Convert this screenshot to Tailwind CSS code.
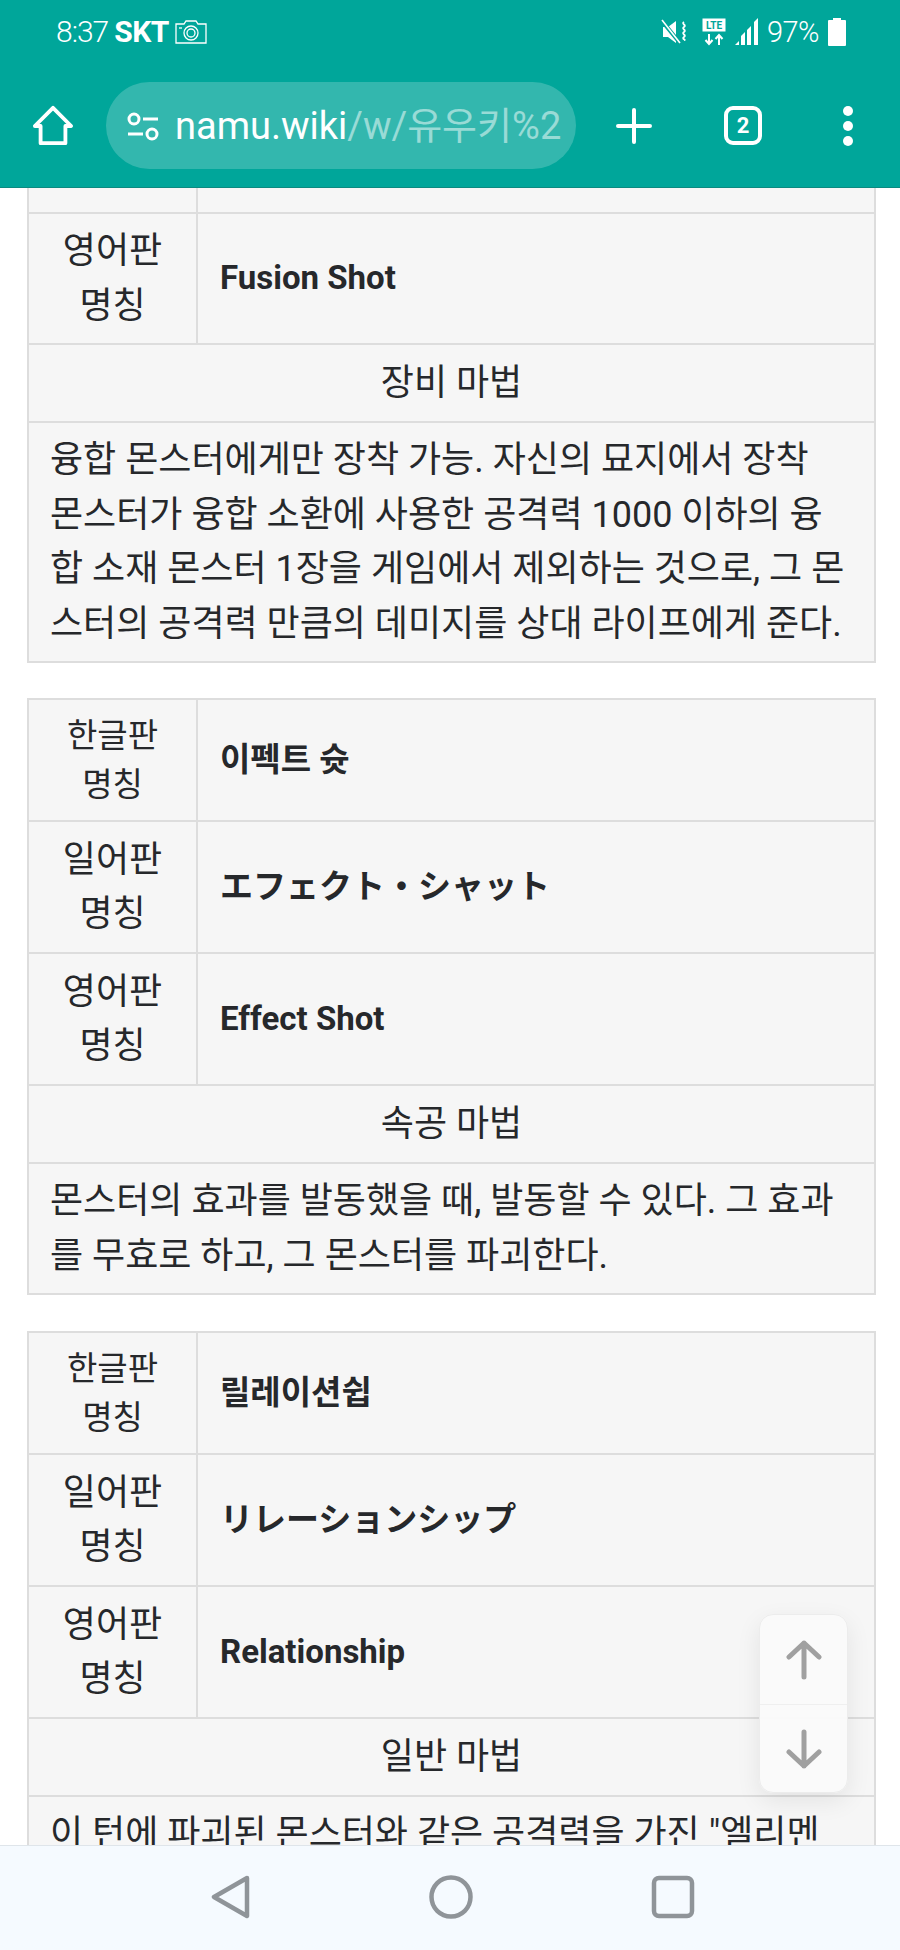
<!DOCTYPE html>
<html lang="ko"><head><meta charset="utf-8">
<script src="https://cdn.jsdelivr.net/npm/@tailwindcss/browser@4"></script>
</head>
<body class="m-0 bg-white">
<div class="relative w-[900px] h-[1950px] overflow-hidden flex flex-col bg-white font-['Roboto','Noto_Sans_CJK_KR',sans-serif] text-[#26282b]">
  <header class="h-[188px] shrink-0 bg-[#00a69a] border-b border-[#0b8a80] text-white flex flex-col">
    <div class="h-[64px] flex items-center justify-between pl-[56px] pr-[54px]">
      <div class="flex items-center gap-[6px] text-[30px] leading-none">
        <span class="tracking-[-1px] font-light">8:37</span><span class="font-bold tracking-[-0.500px]">SKT</span>
        <svg width="32" height="24" viewBox="0 0 32 24" fill="none" stroke="white" stroke-width="1.3"><path d="M1 4h8l2-3h10l2 3h8v19H1z"/><circle cx="16" cy="13" r="7"/><circle cx="16" cy="13" r="4"/><path d="M4 8h3"/></svg>
      </div>
      <div class="flex items-center">
        <svg width="28" height="28" viewBox="0 0 28 28" fill="white" class="mr-[13px]"><path d="M2 9h5l8-6v22l-8-6H2z"/><path d="M1 3l18 22" stroke="#00a69a" stroke-width="4"/><path d="M1 2l18 23" stroke="white" stroke-width="1.6"/><path d="M23 4c-3 2 3 3 0 5s3 3 0 5 3 3 0 5 3 3 0 3" fill="none" stroke="white" stroke-width="1.8"/></svg>
        <svg width="24" height="28" viewBox="0 0 24 28" class="mr-[8px]"><rect x="0.5" y="0.5" width="23" height="13" fill="white"/><text x="12" y="11" text-anchor="middle" font-size="10" font-weight="700" fill="#00a69a" font-family="Roboto">LTE</text><path d="M7 16v9M3.500 22l3.500 4 3.500-4M17 27v-9M13.500 21l3.500-4 3.500 4" stroke="white" stroke-width="2" fill="none"/></svg>
        <svg width="26" height="28" viewBox="0 0 26 28" fill="white" class="mr-[7px]"><path d="M1 27l4-4v4zM7 27v-9l4-4v13zM13 27V12l4-4v19zM20 27V4l4-4v27z"/></svg>
        <span class="text-[29px] leading-none font-light tracking-[-0.500px] mr-[9px]">97%</span>
        <svg width="18" height="28" viewBox="0 0 18 28" fill="white"><path d="M5 0h8v2h4a1 1 0 0 1 1 1v24a1 1 0 0 1-1 1H1a1 1 0 0 1-1-1V3a1 1 0 0 1 1-1h4z"/></svg>
      </div>
    </div>
    <div class="flex-1 flex items-center">
      <div class="w-[106px] shrink-0 flex justify-center">
        <svg width="42" height="42" viewBox="0 0 44 44" fill="none" stroke="white" stroke-width="4" stroke-linejoin="round" stroke-linecap="round"><path d="M3 22L22 3l19 19h-6v18H9V22z"/></svg>
      </div>
      <div class="w-[470px] h-[87px] rounded-[44px] bg-white/20 flex items-center pl-[20px] overflow-hidden shrink-0">
        <svg width="34" height="30" viewBox="0 0 34 30" fill="none" stroke="white" stroke-width="3" class="shrink-0"><circle cx="8" cy="8" r="5"/><path d="M17 8h15M2 23h15"/><circle cx="26" cy="23" r="5"/></svg>
        <div class="ml-[15px] text-[38px] leading-[48px] whitespace-nowrap overflow-hidden w-[386px] shrink-0"><span class="text-white">namu.wiki</span><span class="text-white/50">/w/유우키%20</span></div>
      </div>
      <div class="w-[116px] shrink-0 flex justify-center">
        <svg width="36" height="36" viewBox="0 0 36 36" stroke="white" stroke-width="4" stroke-linecap="round"><path d="M18 2v32M2 18h32"/></svg>
      </div>
      <div class="w-[38px] h-[39px] ml-[32px] shrink-0 border-[4px] border-white rounded-[9px] flex items-center justify-center text-[22px] font-bold leading-none">2</div>
      <div class="flex-1 flex flex-col items-center gap-[5px] pl-[34px]">
        <span class="w-[10px] h-[10px] rounded-full bg-white"></span><span class="w-[10px] h-[10px] rounded-full bg-white"></span><span class="w-[10px] h-[10px] rounded-full bg-white"></span>
      </div>
    </div>
  </header>

  <main class="flex-1 overflow-hidden px-[27px] text-[36px] leading-[54.500px]">
    <table class="w-[849px] border-collapse table-fixed bg-[#f6f6f6] mb-[35px]">
      <colgroup><col class="w-[169px]"><col></colgroup>
      <tbody>
        <tr class="h-[25px]"><td class="border-x-2 border-b-2 border-[#ddd] p-0 leading-none"></td><td class="border-x-2 border-b-2 border-[#ddd] p-0 leading-none"></td></tr>
        <tr class="h-[131px]"><td class="border-2 border-[#ddd] text-center">영어판<br>명칭</td><td class="border-2 border-[#ddd] pl-[22px] font-bold text-[33px]">Fusion Shot</td></tr>
        <tr class="h-[78px]"><td colspan="2" class="border-2 border-[#ddd] text-center">장비 마법</td></tr>
        <tr><td colspan="2" class="border-2 border-[#ddd] px-[21px] py-[10px] whitespace-nowrap">융합 몬스터에게만 장착 가능. 자신의 묘지에서 장착<br>몬스터가 융합 소환에 사용한 공격력 1000 이하의 융<br>합 소재 몬스터 1장을 게임에서 제외하는 것으로, 그 몬<br>스터의 공격력 만큼의 데미지를 상대 라이프에게 준다.</td></tr>
      </tbody>
    </table>
    <table class="w-[849px] border-collapse table-fixed bg-[#f6f6f6] mb-[36px]">
      <colgroup><col class="w-[169px]"><col></colgroup>
      <tbody>
        <tr class="h-[122px]"><td class="border-2 border-[#ddd] text-center text-[33px] leading-[49px]">한글판<br>명칭</td><td class="border-2 border-[#ddd] pl-[22px] font-bold text-[33px]">이펙트 슛</td></tr>
        <tr class="h-[132px]"><td class="border-2 border-[#ddd] text-center">일어판<br>명칭</td><td class="border-2 border-[#ddd] pl-[22px] font-bold text-[33px]">エフェクト・シャット</td></tr>
        <tr class="h-[132px]"><td class="border-2 border-[#ddd] text-center">영어판<br>명칭</td><td class="border-2 border-[#ddd] pl-[22px] font-bold text-[33px]">Effect Shot</td></tr>
        <tr class="h-[78px]"><td colspan="2" class="border-2 border-[#ddd] text-center">속공 마법</td></tr>
        <tr><td colspan="2" class="border-2 border-[#ddd] px-[21px] py-[10px] whitespace-nowrap">몬스터의 효과를 발동했을 때, 발동할 수 있다. 그 효과<br>를 무효로 하고, 그 몬스터를 파괴한다.</td></tr>
      </tbody>
    </table>
    <table class="w-[849px] border-collapse table-fixed bg-[#f6f6f6]">
      <colgroup><col class="w-[169px]"><col></colgroup>
      <tbody>
        <tr class="h-[122px]"><td class="border-2 border-[#ddd] text-center text-[33px] leading-[49px]">한글판<br>명칭</td><td class="border-2 border-[#ddd] pl-[22px] font-bold text-[33px]">릴레이션쉽</td></tr>
        <tr class="h-[132px]"><td class="border-2 border-[#ddd] text-center">일어판<br>명칭</td><td class="border-2 border-[#ddd] pl-[22px] font-bold text-[33px]">リレーションシップ</td></tr>
        <tr class="h-[132px]"><td class="border-2 border-[#ddd] text-center">영어판<br>명칭</td><td class="border-2 border-[#ddd] pl-[22px] font-bold text-[33px]">Relationship</td></tr>
        <tr class="h-[78px]"><td colspan="2" class="border-2 border-[#ddd] text-center">일반 마법</td></tr>
        <tr><td colspan="2" class="border-2 border-[#ddd] px-[21px] py-[10px] whitespace-nowrap">이 턴에 파괴된 몬스터와 같은 공격력을 가진 "엘리멘</td></tr>
      </tbody>
    </table>
  </main>

  <nav class="h-[105px] shrink-0 bg-[#f5faff] border-t border-[#dfe5ea] flex items-center relative z-10 pb-[2px]">
    <div class="w-full flex items-center justify-center gap-[178px] pl-[6px]">
      <svg width="40" height="44" viewBox="0 0 40 44" fill="none" stroke="#8f9499" stroke-width="4.500" stroke-linejoin="round"><path d="M36 3L3 22l33 19z"/></svg>
      <svg width="44" height="44" viewBox="0 0 44 44" fill="none" stroke="#8f9499" stroke-width="4.500"><ellipse cx="22" cy="22" rx="19.500" ry="19.500"/></svg>
      <svg width="44" height="44" viewBox="0 0 44 44" fill="none" stroke="#8f9499" stroke-width="4.500"><rect x="3" y="3" width="38" height="38" rx="5"/></svg>
    </div>
  </nav>

  <div class="absolute left-[759px] top-[1614px] w-[89px] h-[179px] rounded-[14px] bg-[#fafafa]/95 border border-[#ececec] shadow-[0_8px_24px_rgba(0,0,0,0.08)] flex flex-col z-20">
    <div class="h-[90px] flex items-center justify-center border-b border-[#efefef]">
      <svg width="36" height="40" viewBox="0 0 36 40" fill="none" stroke="#a0a0a0" stroke-width="5" stroke-linecap="round" stroke-linejoin="round"><path d="M18 37V3M3 17L18 3l15 14"/></svg>
    </div>
    <div class="flex-1 flex items-center justify-center">
      <svg width="36" height="40" viewBox="0 0 36 40" fill="none" stroke="#a0a0a0" stroke-width="5" stroke-linecap="round" stroke-linejoin="round"><path d="M18 3v34M3 23l15 14 15-14"/></svg>
    </div>
  </div>
</div>
</body></html>
